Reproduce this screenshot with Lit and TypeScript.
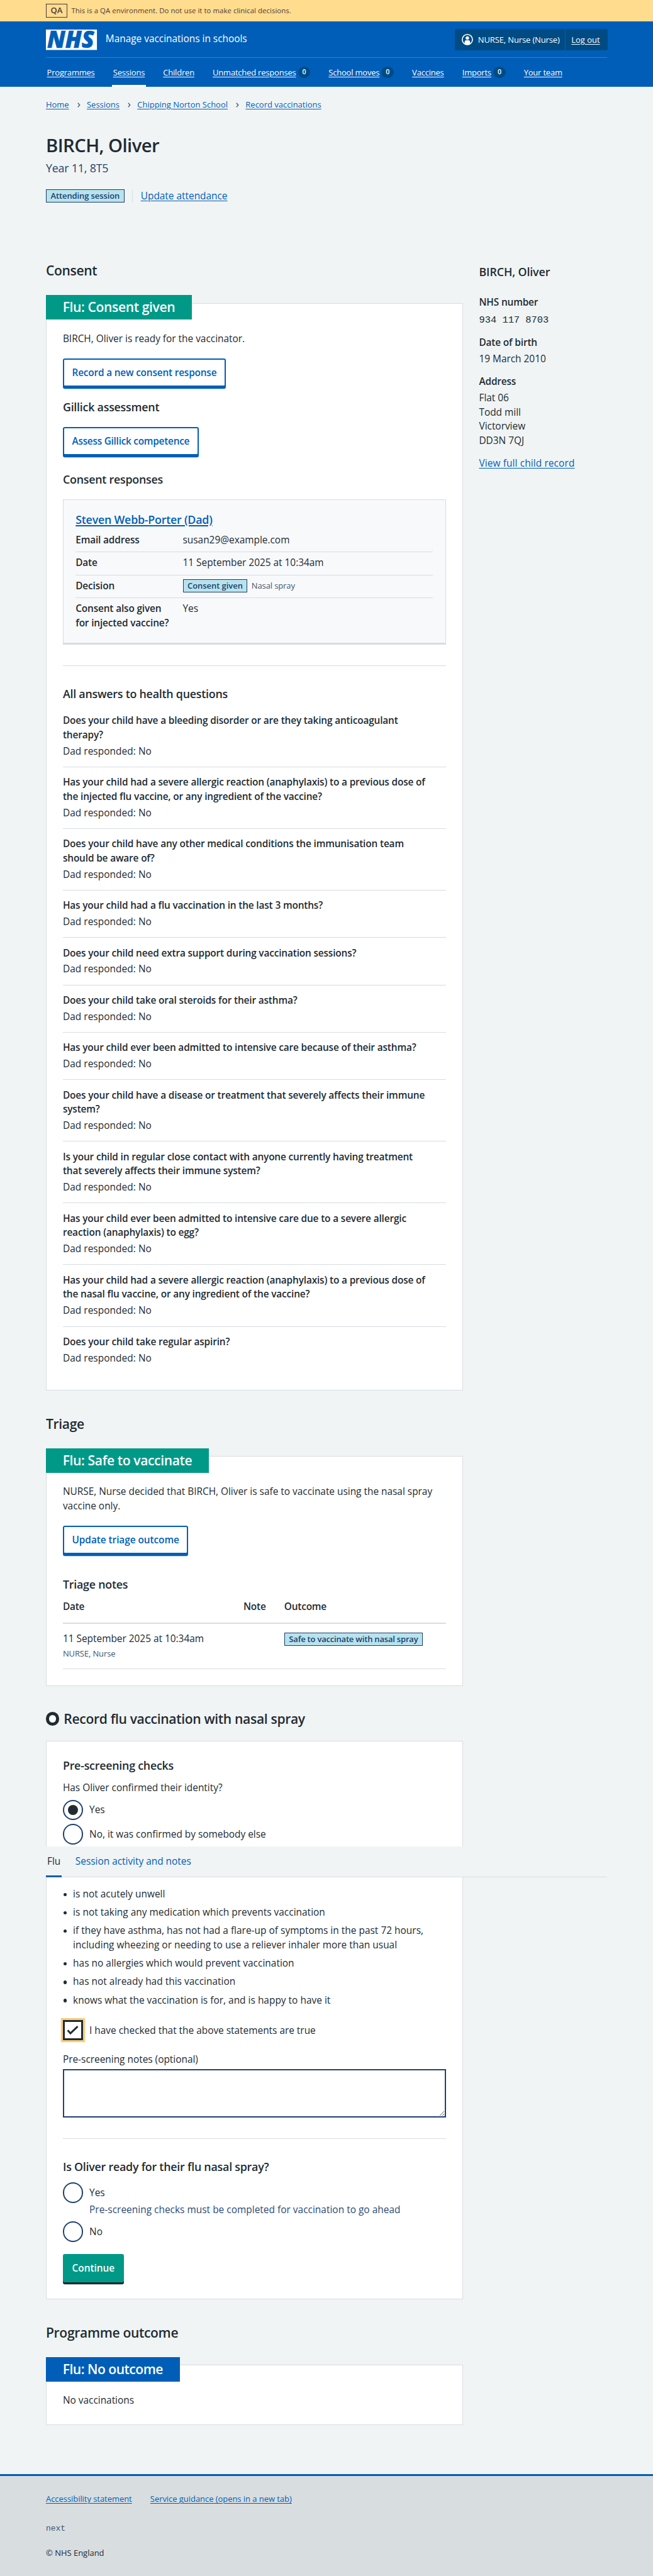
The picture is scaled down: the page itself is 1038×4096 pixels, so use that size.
import { LitElement, html, css, svg } from "lit";
import { customElement } from "lit/decorators.js";
import { classMap } from "lit/directives/class-map.js";

interface NavItem {
  label: string;
  count?: number;
  current?: boolean;
}

const NAV: NavItem[] = [
  { label: "Programmes" },
  { label: "Sessions", current: true },
  { label: "Children" },
  { label: "Unmatched responses", count: 0 },
  { label: "School moves", count: 0 },
  { label: "Vaccines" },
  { label: "Imports", count: 0 },
  { label: "Your team" },
];

const CRUMBS = ["Home", "Sessions", "Chipping Norton School", "Record vaccinations"];

const QUESTIONS = [
  ["Does your child have a bleeding disorder or are they taking anticoagulant", "therapy?"],
  [
    "Has your child had a severe allergic reaction (anaphylaxis) to a previous dose of",
    "the injected flu vaccine, or any ingredient of the vaccine?",
  ],
  ["Does your child have any other medical conditions the immunisation team", "should be aware of?"],
  ["Has your child had a flu vaccination in the last 3 months?"],
  ["Does your child need extra support during vaccination sessions?"],
  ["Does your child take oral steroids for their asthma?"],
  ["Has your child ever been admitted to intensive care because of their asthma?"],
  ["Does your child have a disease or treatment that severely affects their immune", "system?"],
  [
    "Is your child in regular close contact with anyone currently having treatment",
    "that severely affects their immune system?",
  ],
  [
    "Has your child ever been admitted to intensive care due to a severe allergic",
    "reaction (anaphylaxis) to egg?",
  ],
  [
    "Has your child had a severe allergic reaction (anaphylaxis) to a previous dose of",
    "the nasal flu vaccine, or any ingredient of the vaccine?",
  ],
  ["Does your child take regular aspirin?"],
];

const STATEMENTS = [
  ["is not acutely unwell"],
  ["is not taking any medication which prevents vaccination"],
  [
    "if they have asthma, has not had a flare-up of symptoms in the past 72 hours,",
    "including wheezing or needing to use a reliever inhaler more than usual",
  ],
  ["has no allergies which would prevent vaccination"],
  ["has not already had this vaccination"],
  ["knows what the vaccination is for, and is happy to have it"],
];

const lines = (parts: string[]) => parts.map((p, i) => (i ? html`<br />${p}` : p));

const logo = svg`<svg class="logo" viewBox="0 0 100 40" width="100" height="40">
  <rect width="100" height="40" fill="#fff"/>
  <text x="2.5" y="36.3" class="logo-text" textLength="92" lengthAdjust="spacingAndGlyphs">NHS</text>
</svg>`;

const userIcon = svg`<svg viewBox="0 0 22 22" width="22" height="22">
  <circle cx="11" cy="11" r="10" fill="none" stroke="#fff" stroke-width="2"/>
  <circle cx="11" cy="8" r="3.4" fill="#fff"/>
  <path d="M5.7 20.2V15.6a3.2 3.2 0 0 1 3.2-3.2h4.2a3.2 3.2 0 0 1 3.2 3.2v4.6A11 11 0 0 1 5.7 20.2z" fill="#fff"/>
</svg>`;

const chevron = svg`<svg class="chevron" viewBox="0 0 6 10" width="6" height="10">
  <path d="M1 1l3.6 4L1 9" fill="none" stroke="#4c6272" stroke-width="1.7"/>
</svg>`;

@customElement("app-root")
export class AppRoot extends LitElement {
  static styles = css`
    :host {
      display: block;
      background: #f0f4f5;
    }
    .page {
      zoom: 0.81094;
      width: 1280px;
      background: #f0f4f5;
      color: #212b32;
      font: 400 19px/28px "Open Sans", "Noto Sans", sans-serif;
      overflow: hidden;
    }
    .page * {
      box-sizing: border-box;
    }
    h1, h2, h3, h4, p, ul, dl, dd, dt {
      margin: 0;
      padding: 0;
      font-size: inherit;
      font-weight: 400;
    }
    h1, h2, h3, .main p, dt, dd:not(.decision), .statements li, .trow.head span,
    .when, .choice-label, .side > a, .status-link a {
      transform: translateY(1.2331px);
    }
    a {
      color: #005eb8;
      text-decoration: underline;
      text-decoration-thickness: 1px;
      text-underline-offset: 3px;
      white-space: nowrap;
    }
    svg {
      display: block;
      flex: none;
      overflow: visible;
    }
    .banner {
      height: 42px;
      padding: 0 90px;
      display: flex;
      align-items: center;
      gap: 8px;
      background: #ffdc8e;
      color: #4d3a35;
      font-size: 14px;
      letter-spacing: 0.006em;
    }
    .banner-tag {
      height: 26px;
      width: 42px;
      border: 1px solid #4d3a35;
      font: 600 16px/24px "Open Sans", sans-serif;
      text-align: center;
    }
    .header {
      height: 128px;
      padding: 0 90px;
      background: #005eb8;
      color: #fff;
      font-size: 16px;
    }
    .header a {
      color: #fff;
    }
    .header-top {
      height: 72px;
      padding-top: 1px;
      border-bottom: 1px solid #337ec6;
      display: flex;
      align-items: center;
    }
    .logo-text {
      font: italic 800 46.5px "Open Sans", sans-serif;
      fill: #005eb8;
      stroke: #005eb8;
      stroke-width: 0.8px;
    }
    .service {
      margin-left: 17px;
      padding-bottom: 1px;
      font-size: 19px;
    }
    .account {
      margin: 0 -1px 0 auto;
      height: 42px;
      width: 300px;
      display: flex;
      align-items: center;
      background: #004b84;
      border-radius: 4px;
    }
    .account-user {
      flex: 1;
      height: 40px;
      padding-left: 14px;
      display: flex;
      align-items: center;
      gap: 10px;
      white-space: nowrap;
      border-right: 1px solid #005eb8;
      letter-spacing: -0.009em;
    }
    .account-out {
      width: 83px;
      padding-left: 12px;
    }
    .nav {
      height: 56px;
      display: flex;
      gap: 32px;
      letter-spacing: -0.015em;
    }
    .nav-item {
      height: 56px;
      padding: 4px 2px 0;
      display: flex;
      align-items: center;
      gap: 4px;
      border-bottom: 4px solid transparent;
    }
    .nav-item.current {
      border-color: #fff;
    }
    .count {
      width: 24px;
      height: 22px;
      border-radius: 12px;
      background: #004b84;
      font: 600 13px/22px "Open Sans", sans-serif;
      text-align: center;
    }
    .main {
      padding: 0 90px;
    }
    .crumbs {
      margin-top: 23.5px;
      height: 24px;
      display: flex;
      align-items: center;
      font-size: 16px;
      line-height: 24px;
    }
    .chevron {
      margin: 0 12.5px 0 16.5px;
    }
    h1 {
      margin-top: 45.5px;
      font-size: 36px;
      font-weight: 600;
      line-height: 44px;
      letter-spacing: -0.018em;
    }
    .caption {
      margin-top: 6.5px;
      font-size: 22px;
      line-height: 32px;
      letter-spacing: -0.011em;
      color: #24426f;
    }
    .status {
      margin-top: 25.5px;
      height: 26px;
      display: flex;
      align-items: center;
    }
    .status .tag {
      letter-spacing: -0.007em;
    }
    .status-link {
      margin-left: 15.5px;
      padding-left: 15.5px;
      height: 26px;
      line-height: 24px;
      border-left: 1px solid #dbe1e4;
    }
    .status-link a {
      display: inline-block;
    }
    .tag {
      display: inline-block;
      height: 26px;
      padding: 0 8px;
      border: 1px solid #1d3c6b;
      background: #b7e3ee;
      color: #1d3c6b;
      font: 600 16px/24px "Open Sans", sans-serif;
      letter-spacing: -0.014em;
      white-space: nowrap;
    }
    .columns {
      margin-top: 103px;
      display: grid;
      grid-template-columns: 817px 1fr;
      gap: 32px;
      align-items: start;
    }
    h2 {
      margin-top: 45.2px;
      font-size: 26px;
      font-weight: 600;
      line-height: 36px;
      letter-spacing: -0.016em;
    }
    .first {
      margin-top: 11.2px;
    }
    .with-icon {
      display: flex;
      align-items: center;
      gap: 9px;
    }
    .ring {
      width: 26px;
      height: 26px;
      border: 6.2px solid #212b32;
      border-radius: 50%;
      background: #fff;
    }
    h3 {
      font-size: 22px;
      font-weight: 600;
      line-height: 32px;
      letter-spacing: -0.013em;
    }
    .card {
      position: relative;
      margin-top: 46.8px;
      padding: 0 32px;
      border: 1px solid #d8dde0;
      background: #fff;
    }
    .label {
      width: fit-content;
      height: 48px;
      margin: -16.2px 0 22.6px -33.2px;
      padding: 0 33px;
      color: #fff;
      background: #009988;
      font-size: 26px;
      font-weight: 600;
      line-height: 47.5px;
      letter-spacing: -0.018em;
    }
    .label.blue {
      background: #005eb8;
      letter-spacing: -0.024em;
    }
    .button {
      width: fit-content;
      height: 56px;
      padding: 0 15.5px;
      border: 2.5px solid #005eb8;
      border-radius: 4px;
      box-shadow: 0 4px 0 #005eb8;
      background: #fff;
      color: #005eb8;
      font-weight: 600;
      line-height: 51px;
      letter-spacing: -0.012em;
    }
    .button.loose {
      letter-spacing: -0.004em;
    }
    .button.tight {
      letter-spacing: -0.017em;
    }
    .button.primary {
      border-color: #009988;
      background: #009988;
      box-shadow: 0 4px 0 #212b32;
      color: #fff;
      letter-spacing: 0;
    }
    .mt-button {
      margin-top: 25.4px;
    }
    .response {
      margin-top: 23.5px;
      padding: 22.3px 23.8px 25.4px;
      border: 1px solid #d8dde0;
      border-bottom-width: 4px;
      background: #f8f9fb;
    }
    .response-name {
      margin-bottom: 3.5px;
    }
    .response-name a {
      text-decoration-thickness: 2.5px;
    }
    .row {
      display: grid;
      grid-template-columns: 210px 1fr;
      padding: 6.6px 0 9.2px;
      border-bottom: 1px solid #d8dde0;
    }
    .row:last-child {
      border-bottom: 0;
      padding-bottom: 0;
    }
    dt, .question {
      font-weight: 600;
      letter-spacing: -0.01em;
    }
    .decision {
      height: 28px;
      display: flex;
      align-items: center;
      gap: 8px;
    }
    .decision .tag {
      letter-spacing: -0.003em;
    }
    .small {
      font-size: 16px;
      line-height: 24px;
      color: #3d5673;
      letter-spacing: -0.008em;
    }
    .rule {
      height: 1px;
      margin-top: 40px;
      background: #d8dde0;
    }
    .qa {
      padding: 15px 0 16.7px;
      border-bottom: 1px solid #d8dde0;
    }
    .qa:first-child {
      padding-top: 0;
    }
    .qa:last-child {
      padding-bottom: 49px;
      border: 0;
    }
    .answer {
      margin-top: 4px;
      letter-spacing: 0.004em;
    }
    .trow {
      display: grid;
      grid-template-columns: 354px 80px 1fr;
    }
    .trow.head {
      margin-top: 13.6px;
      padding-bottom: 17px;
      border-bottom: 2.5px solid #d8dde0;
      font-weight: 600;
      letter-spacing: -0.013em;
    }
    .trow.body {
      padding: 15.2px 0 17.3px;
      border-bottom: 1px solid #d8dde0;
      margin-bottom: 32px;
    }
    .trow .tag {
      margin-top: 2px;
    }
    .trow .small {
      margin-top: 3.3px;
    }
    .choice {
      display: flex;
      align-items: center;
      gap: 12px;
      height: 40px;
    }
    .radio {
      width: 40px;
      height: 40px;
      border: 2.5px solid #1f4172;
      border-radius: 50%;
      background: #fff;
      display: grid;
      place-items: center;
    }
    .radio.checked::before {
      content: "";
      width: 20px;
      height: 20px;
      border-radius: 50%;
      background: #212b32;
    }
    .checkbox {
      width: 40px;
      height: 40px;
      border: 4px solid #212b32;
      box-shadow: 0 0 0 4px #f8ce7e;
      background: #fff;
      display: grid;
      place-items: center;
    }
    .tabs {
      position: absolute;
      left: -1.2px;
      top: 206px;
      width: 1100px;
      height: 60px;
      display: flex;
      gap: 24px;
      background: #f0f4f5;
      box-shadow: inset 0 -1.2px 0 #d8dde0;
    }
    .tab {
      height: 60px;
      padding: 0 2.5px;
      line-height: 59px;
      color: #005eb8;
      white-space: nowrap;
    }
    .tab.active {
      color: #212b32;
      border-bottom: 4px solid #005eb8;
    }
    .statements {
      margin-top: 82.6px;
      list-style: none;
      display: grid;
      gap: 8px;
    }
    .statements li {
      display: flex;
    }
    .statements li::before {
      content: "";
      flex: none;
      width: 6.5px;
      height: 6.5px;
      margin: 11px 12.5px 0 1px;
      border-radius: 50%;
      background: #212b32;
    }
    .statements span {
      white-space: nowrap;
      letter-spacing: 0.002em;
    }
    .notes {
      display: block;
      width: 751px;
      height: 96px;
      margin-top: 5.4px;
      border: 2.5px solid #1f4172;
      border-radius: 0;
      background: #fff;
      outline: 0;
      resize: vertical;
    }
    .hint {
      margin: -1.4px 0 9.4px 52px;
      color: #2b4b78;
      letter-spacing: 0.002em;
    }
    .side {
      padding-top: 16.8px;
    }
    .side h3 {
      letter-spacing: -0.006em;
    }
    .side dt {
      margin-top: 16.5px;
    }
    .side dt:first-child {
      margin-top: 30.1px;
    }
    .side dd {
      margin-top: 4px;
    }
    .side .mono {
      margin: 5.8px 0 0.4px;
      font-family: "Liberation Mono", monospace;
    }
    .side a {
      display: inline-block;
      margin-top: 16.7px;
      letter-spacing: 0.008em;
    }
    .footer {
      margin-top: 96px;
      height: 202px;
      padding: 34.4px 90px 0;
      border-top: 4px solid #005eb8;
      background: #d8dde0;
      font-size: 16px;
      line-height: 24px;
    }
    .footer-links {
      display: flex;
      gap: 36px;
      letter-spacing: -0.003em;
    }
    .release {
      margin-top: 33.6px;
      font-family: "Liberation Mono", monospace;
      color: #3d5673;
    }
    .copyright {
      margin-top: 24.5px;
    }
  `;

  private radio(label: string, checked = false) {
    return html`<div class="choice">
      <span class=${classMap({ radio: true, checked })}></span><span class="choice-label">${label}</span>
    </div>`;
  }

  private consent() {
    return html`
      <h2 class="first">Consent</h2>
      <section class="card">
        <div class="label">Flu: Consent given</div>
        <p>BIRCH, Oliver is ready for the vaccinator.</p>
        <div class="button mt-button">Record a new consent response</div>
        <h3 style="margin-top:22.5px">Gillick assessment</h3>
        <div class="button tight" style="margin-top:23.5px">Assess Gillick competence</div>
        <h3 style="margin-top:30.5px">Consent responses</h3>
        <div class="response">
          <h3 class="response-name"><a>Steven Webb-Porter (Dad)</a></h3>
          <dl>
            <div class="row"><dt>Email address</dt><dd>susan29@example.com</dd></div>
            <div class="row"><dt>Date</dt><dd>11 September 2025 at 10:34am</dd></div>
            <div class="row">
              <dt>Decision</dt>
              <dd class="decision"><span class="tag">Consent given</span><span class="small">Nasal spray</span></dd>
            </div>
            <div class="row"><dt>Consent also given<br />for injected vaccine?</dt><dd>Yes</dd></div>
          </dl>
        </div>
        <div class="rule"></div>
        <h3 style="margin:38.5px 0 22.5px">All answers to health questions</h3>
        <div>
          ${QUESTIONS.map(
            (q) => html`<div class="qa">
              <p class="question">${lines(q)}</p>
              <p class="answer">Dad responded: No</p>
            </div>`
          )}
        </div>
      </section>
    `;
  }

  private triage() {
    return html`
      <h2>Triage</h2>
      <section class="card">
        <div class="label">Flu: Safe to vaccinate</div>
        <p>NURSE, Nurse decided that BIRCH, Oliver is safe to vaccinate using the nasal spray<br />vaccine only.</p>
        <div class="button loose mt-button">Update triage outcome</div>
        <h3 style="margin-top:43px">Triage notes</h3>
        <div class="trow head"><span>Date</span><span>Note</span><span>Outcome</span></div>
        <div class="trow body">
          <div class="when">
            <div>11 September 2025 at 10:34am</div>
            <div class="small">NURSE, Nurse</div>
          </div>
          <div></div>
          <div><span class="tag">Safe to vaccinate with nasal spray</span></div>
        </div>
      </section>
    `;
  }

  private record() {
    return html`
      <h2 class="with-icon"><span class="ring"></span>Record flu vaccination with nasal spray</h2>
      <section class="card" style="margin-top:26.8px;padding-top:30.6px;padding-bottom:31.8px">
        <h3>Pre-screening checks</h3>
        <p style="margin:14.1px 0 9.1px">Has Oliver confirmed their identity?</p>
        ${this.radio("Yes", true)}
        <div style="height:8px"></div>
        ${this.radio("No, it was confirmed by somebody else")}
        <div class="tabs">
          <span class="tab active">Flu</span><span class="tab">Session activity and notes</span>
        </div>
        <ul class="statements">
          ${STATEMENTS.map((s) => html`<li><span>${lines(s)}</span></li>`)}
        </ul>
        <div class="choice" style="margin-top:25.4px">
          <span class="checkbox">
            <svg viewBox="0 0 24 20" width="24" height="20">
              <path d="M2 10.2l5.4 6L21.6 2.6" fill="none" stroke="#212b32" stroke-width="3.6" />
            </svg>
          </span>
          <span class="choice-label">I have checked that the above statements are true</span>
        </div>
        <p style="margin-top:22.6px">Pre-screening notes (optional)</p>
        <textarea class="notes"></textarea>
        <div class="rule"></div>
        <h3 style="margin:38.5px 0 15.5px">Is Oliver ready for their flu nasal spray?</h3>
        ${this.radio("Yes")}
        <p class="hint">Pre-screening checks must be completed for vaccination to go ahead</p>
        ${this.radio("No")}
        <div class="button primary" style="margin-top:24px">Continue</div>
      </section>
    `;
  }

  render() {
    return html`<div class="page">
      <div class="banner">
        <span class="banner-tag">QA</span>
        <span>This is a QA environment. Do not use it to make clinical decisions.</span>
      </div>
      <header class="header">
        <div class="header-top">
          ${logo}
          <span class="service">Manage vaccinations in schools</span>
          <div class="account">
            <div class="account-user">${userIcon}<span>NURSE, Nurse (Nurse)</span></div>
            <div class="account-out"><a>Log out</a></div>
          </div>
        </div>
        <nav class="nav">
          ${NAV.map(
            (n) => html`<div class=${classMap({ "nav-item": true, current: !!n.current })}>
              <a>${n.label}</a>${n.count === undefined ? "" : html`<span class="count">${n.count}</span>`}
            </div>`
          )}
        </nav>
      </header>
      <main class="main">
        <div class="crumbs">${CRUMBS.map((c, i) => html`${i ? chevron : ""}<a>${c}</a>`)}</div>
        <h1>BIRCH, Oliver</h1>
        <p class="caption">Year 11, 8T5</p>
        <div class="status">
          <span class="tag">Attending session</span>
          <span class="status-link"><a>Update attendance</a></span>
        </div>
        <div class="columns">
          <div>
            ${this.consent()} ${this.triage()} ${this.record()}
            <h2>Programme outcome</h2>
            <section class="card" style="padding-bottom:33.2px">
              <div class="label blue">Flu: No outcome</div>
              <p>No vaccinations</p>
            </section>
          </div>
          <aside class="side">
            <h3>BIRCH, Oliver</h3>
            <dl>
              <dt>NHS number</dt>
              <dd class="mono">934 117 8703</dd>
              <dt>Date of birth</dt>
              <dd>19 March 2010</dd>
              <dt>Address</dt>
              <dd>Flat 06<br />Todd mill<br />Victorview<br />DD3N 7QJ</dd>
            </dl>
            <a>View full child record</a>
          </aside>
        </div>
      </main>
      <footer class="footer">
        <div class="footer-links"><a>Accessibility statement</a><a>Service guidance (opens in a new tab)</a></div>
        <p class="release">next</p>
        <p class="copyright">© NHS England</p>
      </footer>
    </div>`;
  }
}
